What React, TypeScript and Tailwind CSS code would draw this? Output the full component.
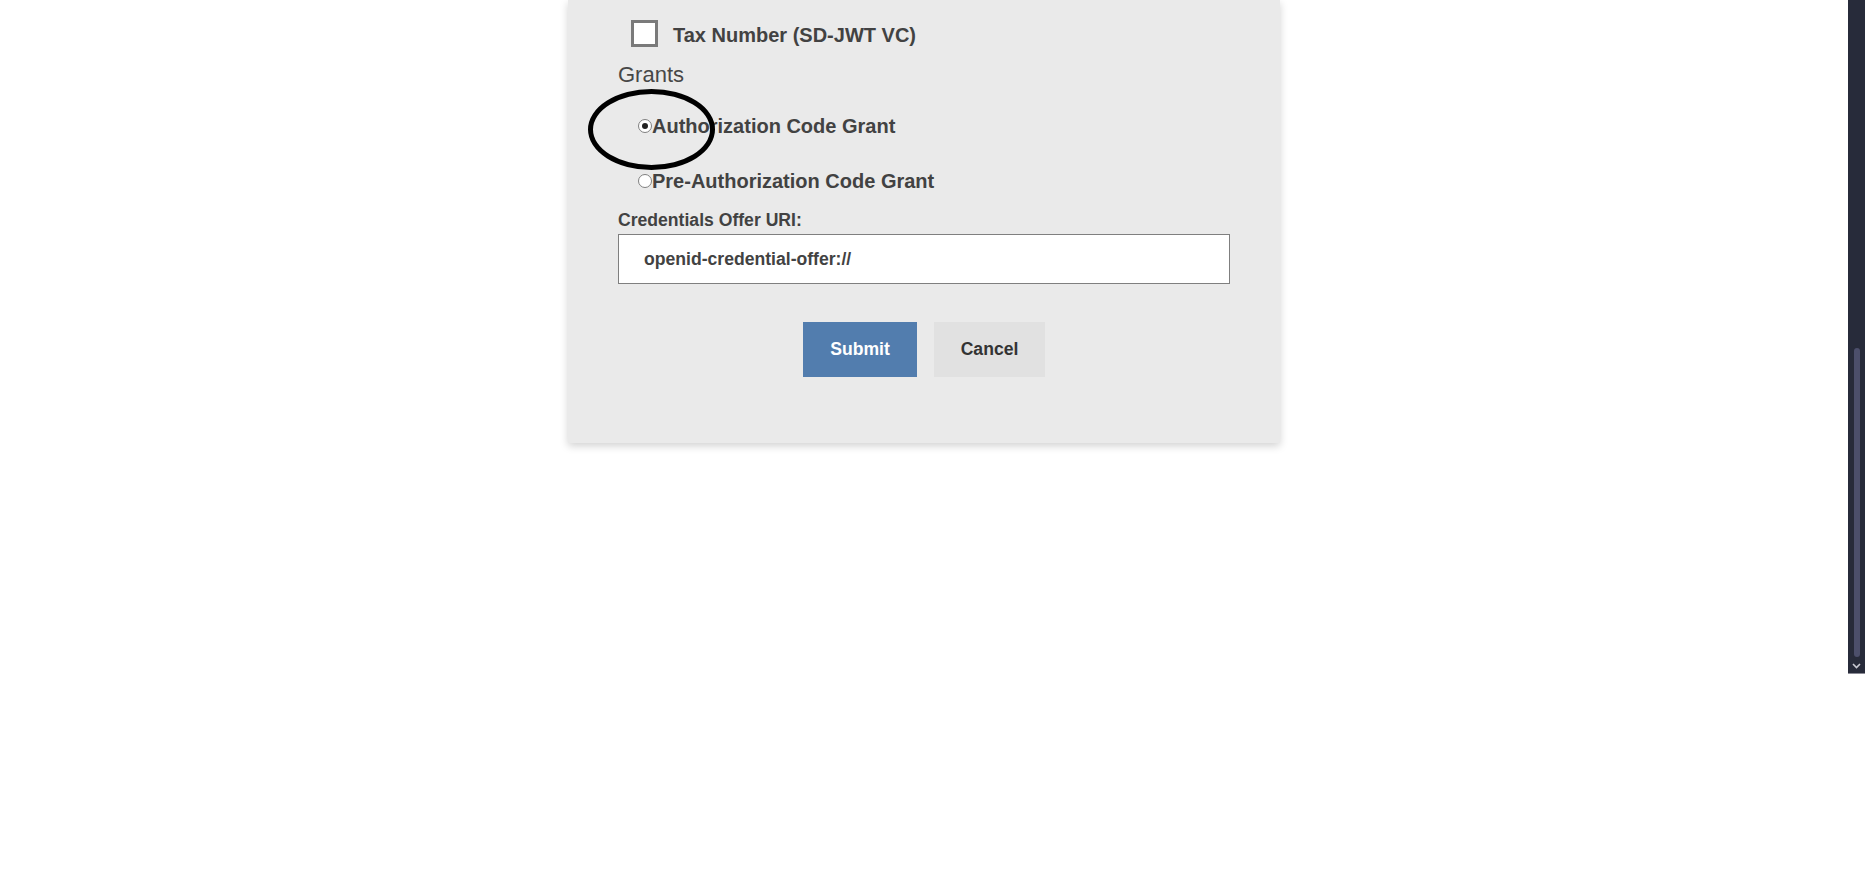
import React from "react";

function Radio({ checked }: { checked?: boolean }) {
  return (
    <span className="flex h-[14px] w-[14px] shrink-0 items-center justify-center rounded-full border border-[#808080] bg-white">
      {checked ? <span className="h-[6px] w-[6px] rounded-full bg-[#222]" /> : null}
    </span>
  );
}

export default function App() {
  return (
    <div
      className="flex h-[892px] w-full overflow-hidden bg-white text-[#424242]"
      style={{ fontFamily: '"Liberation Sans", Arial, sans-serif' }}
    >
      <div className="flex-1">
        <div className="relative mx-auto w-[712px] bg-[#eaeaea] px-[50px] pb-[66px] pt-[20px] shadow-[0_3px_8px_rgba(0,0,0,0.18)]">
          {/* Checkbox row */}
          <div className="flex h-[26px] items-center gap-[15px] pl-[13px]">
            <span className="h-[27px] w-[27px] shrink-0 border-[3px] border-[#7a7a7a] bg-white" />
            <span className="translate-y-[2px] text-[20px] font-bold leading-[26px]">Tax Number (SD-JWT VC)</span>
          </div>

          <div className="mt-[16px] text-[22px] leading-[26px] text-[#474747]">Grants</div>

          <div className="mt-[25px] flex h-[26px] items-center pl-[20px]">
            <Radio checked />
            <span className="text-[20px] font-bold leading-[26px]">Authorization Code Grant</span>
          </div>

          <div className="mt-[29px] flex h-[26px] items-center pl-[20px]">
            <Radio />
            <span className="text-[20px] font-bold leading-[26px]">Pre-Authorization Code Grant</span>
          </div>

          <div className="mt-[16px] text-[17.6px] font-bold leading-[20px]">Credentials Offer URI:</div>

          <div className="mt-[4px] flex h-[50px] w-full items-center border border-[#7f7f7f] bg-white pl-[25px] text-[17.6px] font-bold">
            openid-credential-offer://
          </div>

          <div className="mt-[38px] flex justify-center gap-[17px]">
            <button className="h-[55px] w-[114px] bg-[#527dae] text-[17.6px] font-bold text-white">
              Submit
            </button>
            <button className="h-[55px] w-[111px] bg-[#e1e1e1] text-[17.6px] font-bold text-[#333]">
              Cancel
            </button>
          </div>

          {/* annotation ellipse */}
          <div className="pointer-events-none absolute left-[20px] top-[89px] h-[81px] w-[127px] rounded-[50%] border-[5px] border-black" />
        </div>
      </div>

      {/* scrollbar */}
      <div className="w-[17px] shrink-0">
        <div className="flex h-[674px] flex-col items-center border-b border-[#8a8a95] bg-[#272b3a]">
          <div className="h-[348px] shrink-0" />
          <div className="h-[309px] w-[6px] shrink-0 rounded-full bg-[#4c4f6b]" />
          <svg className="mt-[6px]" width="9" height="6" viewBox="0 0 9 6">
            <path d="M1 1 L4.5 4.5 L8 1" stroke="#c9cad3" strokeWidth="1.6" fill="none" />
          </svg>
        </div>
      </div>
    </div>
  );
}
